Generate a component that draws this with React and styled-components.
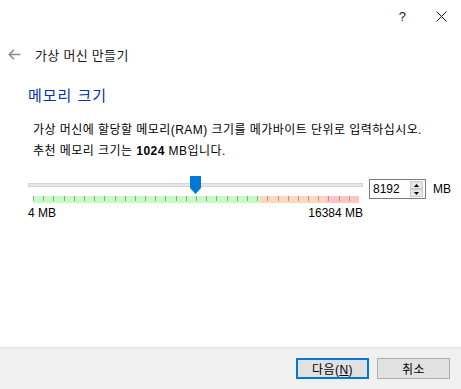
import React from 'react';
import styled, { createGlobalStyle } from 'styled-components';

const GlobalStyle = createGlobalStyle`
  html, body {
    margin: 0;
    padding: 0;
    background: #ffffff;
  }
  #root {
    height: 389px;
    display: flex;
    flex-direction: column;
    font-family: "Liberation Sans", "Noto Sans CJK KR", sans-serif;
    font-size: 12px;
    color: #000000;
  }
`;

const TitleBar = styled.div`
  height: 32px;
  display: flex;
  align-items: center;
  justify-content: flex-end;
  padding-right: 14px;
  gap: 30px;
`;

const HelpMark = styled.span`
  font-size: 13px;
  color: #1a1a1a;
`;

const BackRow = styled.div`
  height: 44px;
  display: flex;
  align-items: center;
  padding-left: 8px;
  gap: 14px;
`;

const WizardTitle = styled.span`
  font-size: 13px;
  letter-spacing: 0.3px;
  color: #1a1a1a;
`;

const Content = styled.div`
  padding-left: 28px;
  display: flex;
  flex-direction: column;
`;

const Heading = styled.div`
  margin-top: 10px;
  font-size: 15px;
  letter-spacing: 1px;
  line-height: 20px;
  color: #0033a6;
`;

const Paragraph = styled.div`
  margin-top: ${(p) => p.$top || 0}px;
  padding-left: 5px;
  line-height: 21px;
  letter-spacing: 0.45px;
`;

const SliderRow = styled.div`
  margin-top: 14px;
  display: flex;
  align-items: flex-start;
`;

const SliderArea = styled.div`
  position: relative;
  width: 335px;
  display: flex;
  flex-direction: column;
`;

const Track = styled.div`
  margin-top: 7px;
  height: 4px;
  box-sizing: border-box;
  background: #e7e7e7;
  border: 1px solid #d4d4d4;
`;

const Handle = styled.svg`
  position: absolute;
  top: 0;
  width: 11px;
  height: 18px;
`;

const Band = styled.div`
  margin: 9px 4px 0 5px;
  height: 7px;
  display: flex;
  background: linear-gradient(
    to right,
    #c4fcc4 0%,
    #c4fcc4 69.6%,
    #ffd6c0 69.6%,
    #ffd6c0 89.9%,
    #ffc4c4 89.9%,
    #ffc4c4 100%
  );
`;

const TickCell = styled.div`
  flex: 1;
  height: 5px;
  border-left: 1px solid #a39a8c;
`;

const Scale = styled.div`
  margin-top: 2px;
  height: 16px;
  line-height: 16px;
  display: flex;
  justify-content: space-between;
`;

const SpinBox = styled.div`
  margin: 3px 0 0 6px;
  width: 57px;
  height: 20px;
  box-sizing: border-box;
  border: 1px solid #7a7a7a;
  background: #ffffff;
  display: flex;
  align-items: center;
  padding: 0 2px 0 3px;
`;

const SpinValue = styled.span`
  flex: 1;
  line-height: 16px;
`;

const SpinButtons = styled.div`
  width: 13px;
  height: 16px;
  display: flex;
  flex-direction: column;
`;

const SpinButton = styled.div`
  flex: 1;
  box-sizing: border-box;
  background: #e6e6e6;
  border: 1px solid #cccccc;
  display: flex;
  align-items: center;
  justify-content: center;
`;

const UnitLabel = styled.span`
  margin: 3px 0 0 7px;
  line-height: 20px;
`;

const Footer = styled.div`
  margin-top: auto;
  height: 42px;
  box-sizing: border-box;
  border-top: 1px solid #dfdfdf;
  background: #f0f0f0;
  display: flex;
  justify-content: flex-end;
  align-items: flex-start;
  padding: 10px 11px 0 0;
  gap: 8px;
`;

const Button = styled.button`
  width: 73px;
  height: 21px;
  box-sizing: border-box;
  padding: 0;
  font-family: inherit;
  font-size: 12px;
  letter-spacing: 0.4px;
  color: #000000;
  background: #e1e1e1;
  border: ${(p) => (p.$primary ? '2px solid #0078d7' : '1px solid #adadad')};
`;

const Mnemonic = styled.span`
  text-decoration: underline;
`;

const TICKS = 32;
const MIN = 4;
const MAX = 16384;
const VALUE = 8192;

const App = () => {
  const ratio = (VALUE - MIN) / (MAX - MIN);
  const handleLeft = 5 + ratio * 326 - 5.5;

  return (
    <>
      <GlobalStyle />
      <TitleBar>
        <HelpMark>?</HelpMark>
        <svg width="11" height="11" viewBox="0 0 11 11">
          <path d="M0.5 0.5 L10.5 10.5 M10.5 0.5 L0.5 10.5" stroke="#1a1a1a" strokeWidth="1" />
        </svg>
      </TitleBar>
      <BackRow>
        <svg width="13" height="11" viewBox="0 0 13 11">
          <path d="M6 0.8 L1.2 5.5 L6 10.2 M1.2 5.5 L12.5 5.5" stroke="#8a8a8a" strokeWidth="1.5" fill="none" />
        </svg>
        <WizardTitle>가상 머신 만들기</WizardTitle>
      </BackRow>
      <Content>
        <Heading>메모리 크기</Heading>
        <Paragraph $top={14}>가상 머신에 할당할 메모리(RAM) 크기를 메가바이트 단위로 입력하십시오.</Paragraph>
        <Paragraph>
          추천 메모리 크기는 <b>1024</b> MB입니다.
        </Paragraph>
        <SliderRow>
          <SliderArea>
            <Track />
            <Handle viewBox="0 0 11 18" style={{ left: `${handleLeft}px` }}>
              <polygon points="0,0 11,0 11,12 5.5,18 0,12" fill="#0078d7" />
            </Handle>
            <Band>
              {Array.from({ length: TICKS }, (_, i) => <TickCell key={i} />)}
            </Band>
            <Scale>
              <span>4 MB</span>
              <span>16384 MB</span>
            </Scale>
          </SliderArea>
          <SpinBox>
            <SpinValue>8192</SpinValue>
            <SpinButtons>
              <SpinButton>
                <svg width="5" height="3" viewBox="0 0 5 3"><polygon points="2.5,0 5,3 0,3" fill="#000" /></svg>
              </SpinButton>
              <SpinButton>
                <svg width="5" height="3" viewBox="0 0 5 3"><polygon points="0,0 5,0 2.5,3" fill="#000" /></svg>
              </SpinButton>
            </SpinButtons>
          </SpinBox>
          <UnitLabel>MB</UnitLabel>
        </SliderRow>
      </Content>
      <Footer>
        <Button type="button" $primary>
          다음(<Mnemonic>N</Mnemonic>)
        </Button>
        <Button type="button">취소</Button>
      </Footer>
    </>
  );
};

export default App;
